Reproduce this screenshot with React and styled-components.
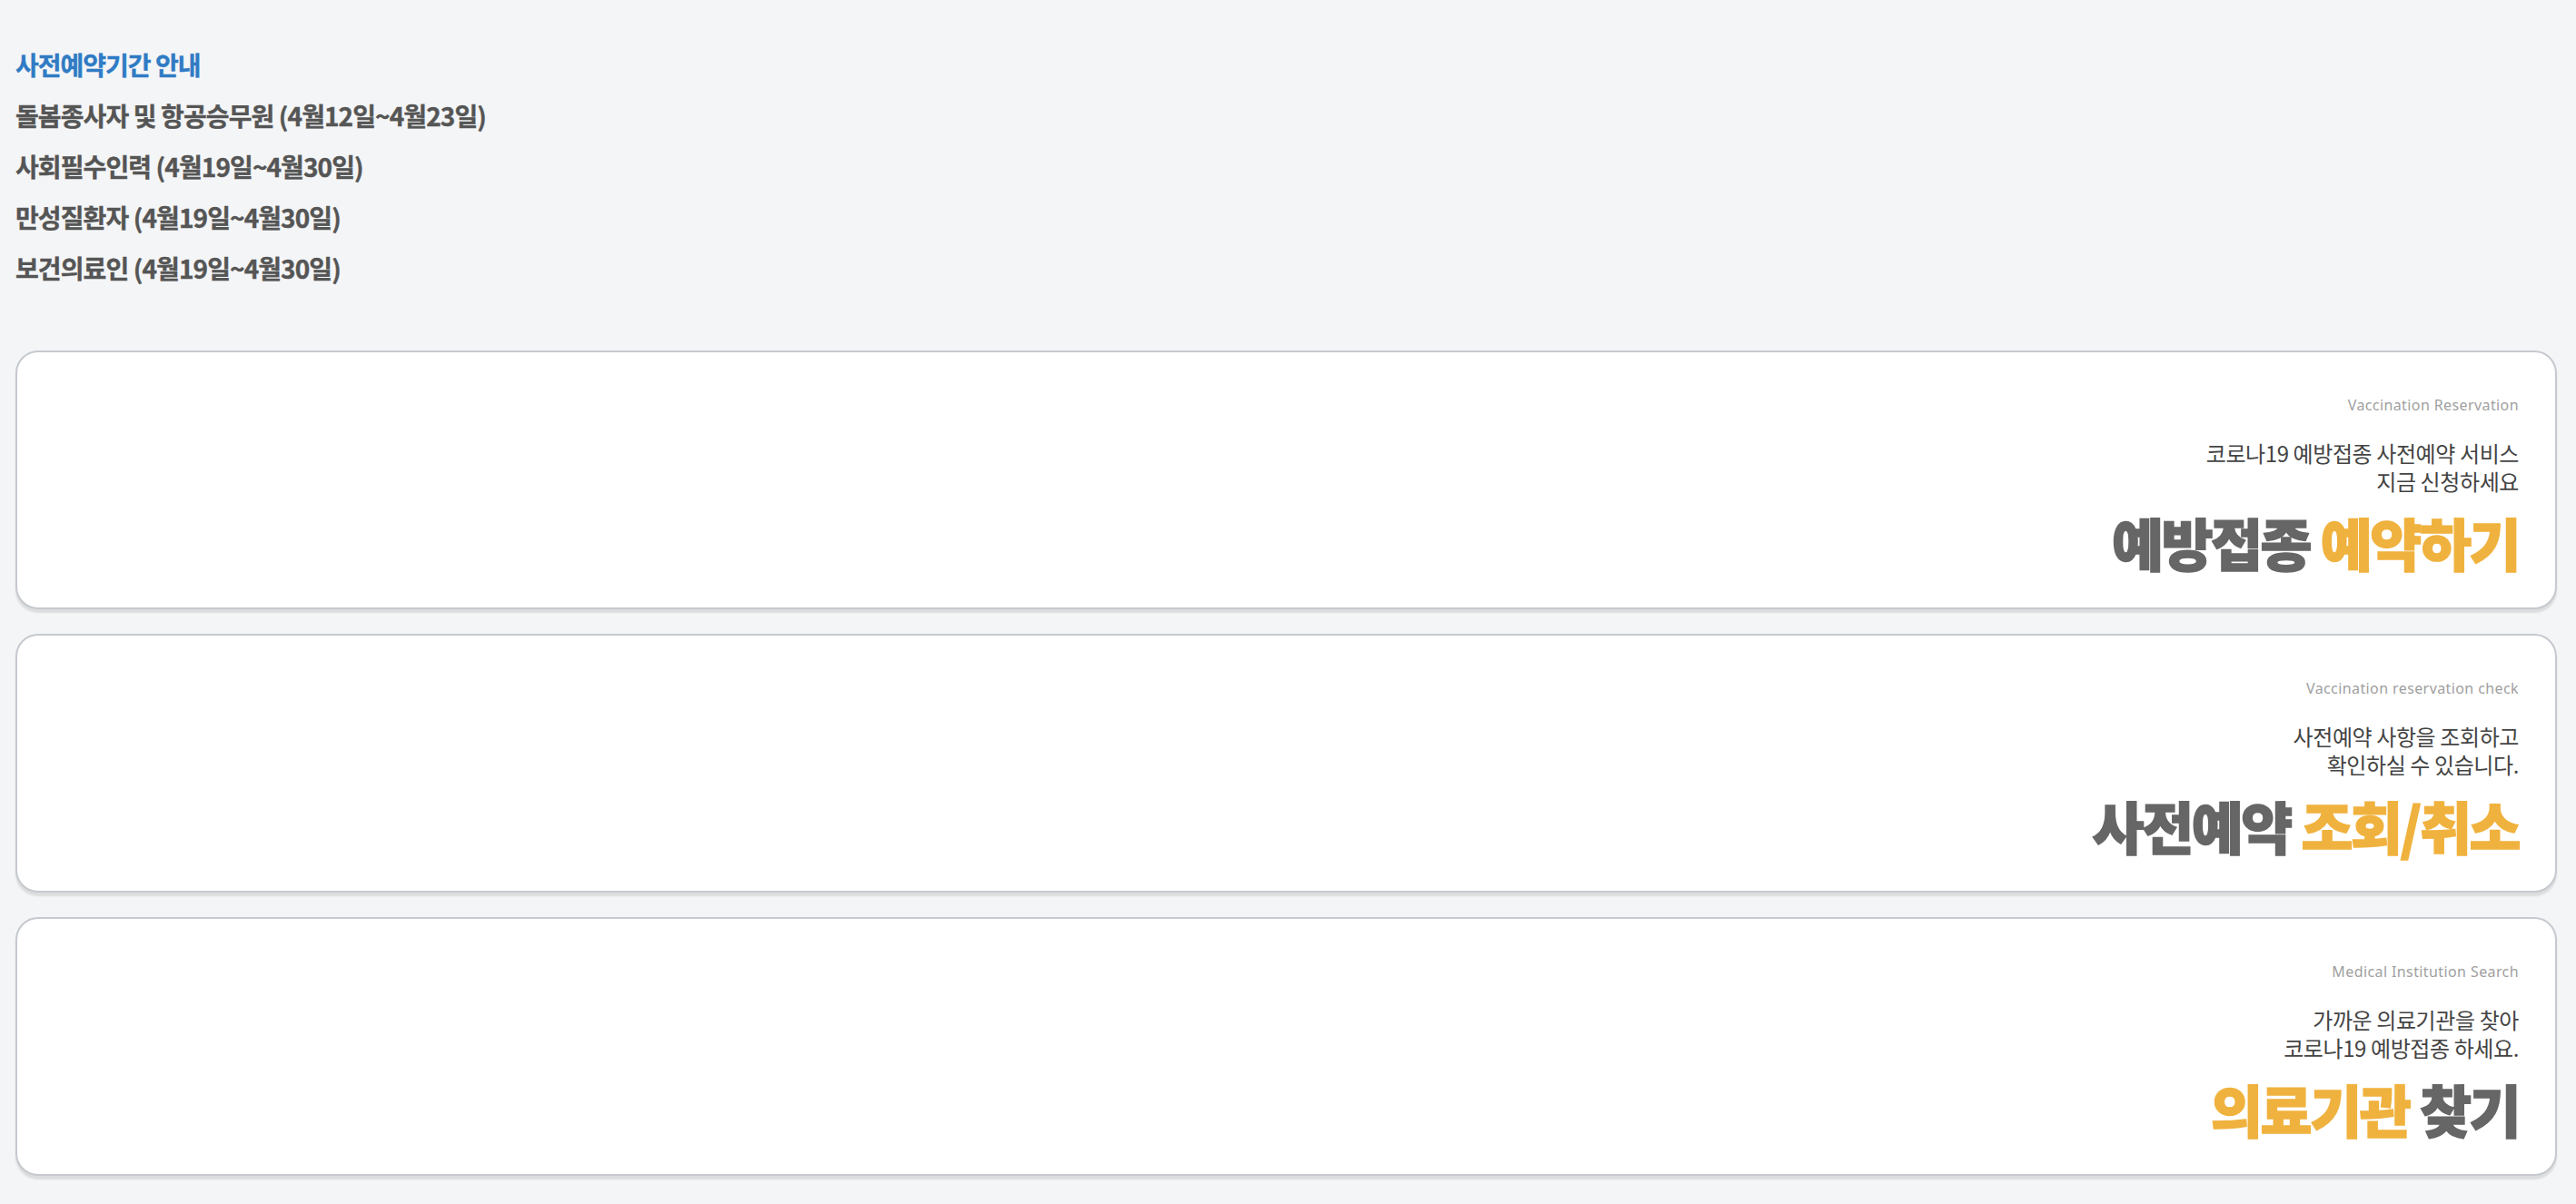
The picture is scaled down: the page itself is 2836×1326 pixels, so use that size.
import React from "react";
import styled, { createGlobalStyle } from "styled-components";

const GlobalStyle = createGlobalStyle`
  html, body {
    margin: 0;
    padding: 0;
    background: #f4f5f7;
  }
  body {
    font-family: "Noto Sans CJK KR", "Noto Sans", sans-serif;
  }
`;

const periods = [
  "돌봄종사자 및 항공승무원 (4월12일~4월23일)",
  "사회필수인력 (4월19일~4월30일)",
  "만성질환자 (4월19일~4월30일)",
  "보건의료인 (4월19일~4월30일)",
];

const cards = [
  {
    eng: "Vaccination Reservation",
    desc: ["코로나19 예방접종 사전예약 서비스", "지금 신청하세요"],
    title: [
      { text: "예방접종 ", accent: false },
      { text: "예약하기", accent: true },
    ],
  },
  {
    eng: "Vaccination reservation check",
    desc: ["사전예약 사항을 조회하고", "확인하실 수 있습니다."],
    title: [
      { text: "사전예약 ", accent: false },
      { text: "조회/취소", accent: true },
    ],
  },
  {
    eng: "Medical Institution Search",
    desc: ["가까운 의료기관을 찾아", "코로나19 예방접종 하세요."],
    title: [
      { text: "의료기관 ", accent: true },
      { text: "찾기", accent: false },
    ],
  },
];

function App() {
  return (
    <>
      <GlobalStyle />
      <Page>
        <Notice>
          <NoticeTitle>사전예약기간 안내</NoticeTitle>
          {periods.map((p) => (
            <NoticeLine key={p}>{p}</NoticeLine>
          ))}
        </Notice>
        <CardList>
          {cards.map((c) => (
            <Card key={c.eng}>
              <Eng>{c.eng}</Eng>
              <Desc>
                {c.desc.map((d) => (
                  <div key={d}>{d}</div>
                ))}
              </Desc>
              <Title>
                {c.title.map((t) => (
                  <TitlePart key={t.text} $accent={t.accent}>
                    {t.text}
                  </TitlePart>
                ))}
              </Title>
            </Card>
          ))}
        </CardList>
      </Page>
    </>
  );
}

const Page = styled.div`
  padding: 43px 21px 30px 17px;
`;

const Notice = styled.div`
  display: flex;
  flex-direction: column;
`;

const NoticeTitle = styled.div`
  font-size: 28px;
  line-height: 56px;
  font-weight: 700;
  letter-spacing: -1px;
  color: #2f7bc4;
  -webkit-text-stroke: 0.4px #2f7bc4;
`;

const NoticeLine = styled.div`
  font-size: 28px;
  line-height: 56px;
  font-weight: 700;
  letter-spacing: -0.9px;
  color: #555555;
  -webkit-text-stroke: 0.4px #555555;
`;

const CardList = styled.div`
  margin-top: 63px;
  display: flex;
  flex-direction: column;
  gap: 27px;
`;

const Card = styled.div`
  display: flex;
  flex-direction: column;
  align-items: flex-end;
  text-align: right;
  background: #ffffff;
  border: 2px solid #c6c9cf;
  border-radius: 25px;
  box-shadow: 0 4px 2px rgba(0, 0, 0, 0.1);
  padding: 48px 40px 41px 40px;
`;

const Eng = styled.div`
  font-family: "Noto Sans", "Liberation Sans", sans-serif;
  font-size: 16px;
  line-height: 20px;
  letter-spacing: 0.4px;
  color: #a0a0a0;
`;

const Desc = styled.div`
  margin-top: 27px;
  font-size: 24px;
  line-height: 31px;
  letter-spacing: -0.4px;
  color: #444444;
`;

const Title = styled.div`
  margin-top: 21px;
  font-size: 62px;
  line-height: 62px;
  font-weight: 900;
  letter-spacing: -2.5px;
  white-space: pre;
`;

const TitlePart = styled.span`
  color: ${(p) => (p.$accent ? "#f0b23e" : "#666666")};
  -webkit-text-stroke: 1.5px ${(p) => (p.$accent ? "#f0b23e" : "#666666")};
`;

export default App;
